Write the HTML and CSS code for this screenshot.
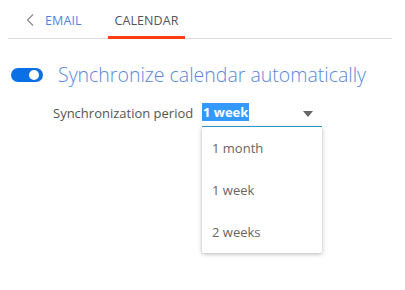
FILE: index.html
```html
<!DOCTYPE html>
<html>
<head>
<meta charset="utf-8">
<link rel="stylesheet" href="styles.css">
</head>
<body>
<div class="page">
  <div class="tabs">
    <div class="tab back">
      <svg class="chev" width="8" height="12" viewBox="0 0 8 12"><path d="M7 0.5 L1.5 6 L7 11.5" fill="none" stroke="#888" stroke-width="1.2"/></svg>
      <span class="tab-link">EMAIL</span>
    </div>
    <div class="tab active"><span>CALENDAR</span></div>
  </div>
  <div class="content">
    <div class="sync-row">
      <span class="toggle"><span class="knob"></span></span>
      <span class="sync-title">Synchronize calendar automatically</span>
    </div>
    <div class="period-row">
      <span class="period-label">Synchronization period</span>
      <div class="select-wrap">
        <div class="select">
          <span class="selected">1 week</span>
          <svg class="arrow" width="10" height="6" viewBox="0 0 10 6"><path d="M0 0 H10 L5 6 Z" fill="#666"/></svg>
        </div>
        <ul class="menu">
          <li>1 month</li>
          <li>1 week</li>
          <li>2 weeks</li>
        </ul>
      </div>
    </div>
  </div>
</div>
</body>
</html>
```
FILE: styles.css
```css
* { box-sizing: border-box; }
html, body { margin: 0; padding: 0; background: #fff; }
body { font-family: "Open Sans", "Liberation Sans", sans-serif; width: 405px; height: 290px; overflow: hidden; }
.page { padding: 0 13px 0 8px; }
.tabs {
  display: flex;
  align-items: stretch;
  height: 39px;
  border-bottom: 1px solid #dedede;
}
.tab {
  display: flex;
  align-items: center;
  font-size: 12.5px;
  letter-spacing: 0.1px;
  padding-top: 2px;
}
.back { padding-left: 18px; gap: 11px; width: 100px; }
.chev { display: block; margin-top: -1px; }
.tab-link { color: #4f86dd; }
.active {
  width: 77px;
  justify-content: center;
  color: #555;
  border-bottom: 3px solid #ff3d12;
  margin-bottom: -1px;
  padding-top: 5px;
}
.content { padding-top: 22px; }
.sync-row { display: flex; align-items: center; gap: 15px; padding-left: 3px; }
.toggle {
  position: relative;
  width: 32px;
  height: 14px;
  border-radius: 7px;
  background: #0b6fe6;
  flex: none;
}
.knob {
  position: absolute;
  left: 18px;
  top: 2px;
  width: 10px;
  height: 10px;
  border-radius: 50%;
  background: #fff;
}
.sync-title {
  font-size: 19.5px;
  font-weight: 300;
  color: #5a88dc;
  line-height: 28px;
}
.period-row {
  display: flex;
  align-items: flex-start;
  padding-left: 45px;
  margin-top: 10px;
}
.period-label {
  font-size: 13px;
  color: #555;
  line-height: 18px;
  padding-top: 5px;
  width: 149px;
}
.select-wrap { width: 120px; }
.select {
  display: flex;
  justify-content: space-between;
  align-items: flex-start;
  height: 28px;
  border-bottom: 1px solid #2aa0dc;
}
.selected {
  background: #3399ff;
  color: #fff;
  font-weight: 700;
  font-size: 13px;
  line-height: 18px;
  padding: 0 1px;
  margin-top: 4px;
}
.arrow { margin-right: 9px; margin-top: 12px; }
.menu {
  list-style: none;
  margin: 0;
  padding: 0;
  background: #fff;
  border-radius: 2px;
  box-shadow: 0 1px 4px rgba(0,0,0,0.3);
  height: 126px;
}
.menu li {
  height: 42px;
  line-height: 42px;
  padding-left: 10px;
  font-size: 13px;
  color: #666;
}
```
